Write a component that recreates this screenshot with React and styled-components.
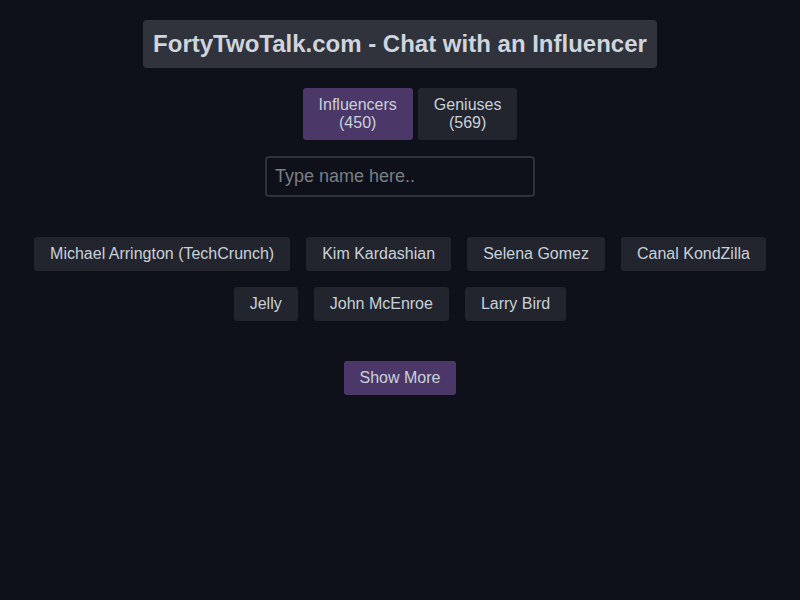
import React, { useState } from "react";
import styled, { createGlobalStyle } from "styled-components";

const GlobalStyle = createGlobalStyle`
  html, body {
    margin: 0;
    padding: 0;
    background: #0e1119;
    font-family: "Liberation Sans", Arial, sans-serif;
    color: #c9d1d9;
  }
`;

const influencers = [
  "Michael Arrington (TechCrunch)",
  "Kim Kardashian",
  "Selena Gomez",
  "Canal KondZilla",
  "Jelly",
  "John McEnroe",
  "Larry Bird",
];

function App() {
  const [tab, setTab] = useState("influencers");
  const [query, setQuery] = useState("");

  return (
    <Page>
      <GlobalStyle />
      <Title>FortyTwoTalk.com - Chat with an Influencer</Title>
      <Tabs>
        <Tab active={tab === "influencers"} onClick={() => setTab("influencers")}>
          Influencers
          <br />
          (450)
        </Tab>
        <Tab active={tab === "geniuses"} onClick={() => setTab("geniuses")}>
          Geniuses
          <br />
          (569)
        </Tab>
      </Tabs>
      <Search
        placeholder="Type name here.."
        value={query}
        onChange={(e) => setQuery(e.target.value)}
      />
      <Chips>
        {influencers.map((name) => (
          <Chip key={name}>{name}</Chip>
        ))}
      </Chips>
      <MoreButton>Show More</MoreButton>
    </Page>
  );
}

const Page = styled.div`
  display: flex;
  flex-direction: column;
  align-items: center;
  padding: 20px 20px 0;
`;

const Title = styled.h1`
  margin: 0;
  height: 48px;
  line-height: 48px;
  padding: 0 10px;
  background: #30333b;
  border-radius: 4px;
  font-size: 24px;
  font-weight: bold;
  color: #cfd5de;
  white-space: nowrap;
`;

const Tabs = styled.div`
  display: flex;
  gap: 5px;
  margin-top: 20px;
  margin-left: 20px;
`;

const Tab = styled.button`
  border: none;
  border-radius: 3px;
  padding: 8px 16px;
  font-family: inherit;
  font-size: 16px;
  line-height: 18px;
  color: #c9d1d9;
  background: ${(p) => (p.active ? "#4b3868" : "#22252e")};
  cursor: pointer;
`;

const Search = styled.input`
  margin-top: 16px;
  box-sizing: border-box;
  width: 270px;
  height: 41px;
  padding: 0 8px;
  border: 2px solid #2f323a;
  border-radius: 4px;
  background: #0e1119;
  color: #c9d1d9;
  font-family: inherit;
  font-size: 18px;
  outline: none;

  &::placeholder {
    color: #7b7f86;
  }
`;

const Chips = styled.div`
  display: flex;
  flex-wrap: wrap;
  justify-content: center;
  gap: 16px;
  margin-top: 40px;
  max-width: 760px;
`;

const Chip = styled.button`
  border: none;
  border-radius: 3px;
  padding: 8px 16px;
  font-family: inherit;
  font-size: 16px;
  line-height: 18px;
  color: #c9d1d9;
  background: #22252e;
  cursor: pointer;
`;

const MoreButton = styled(Chip)`
  margin-top: 40px;
  background: #4b3868;
`;

export default App;
